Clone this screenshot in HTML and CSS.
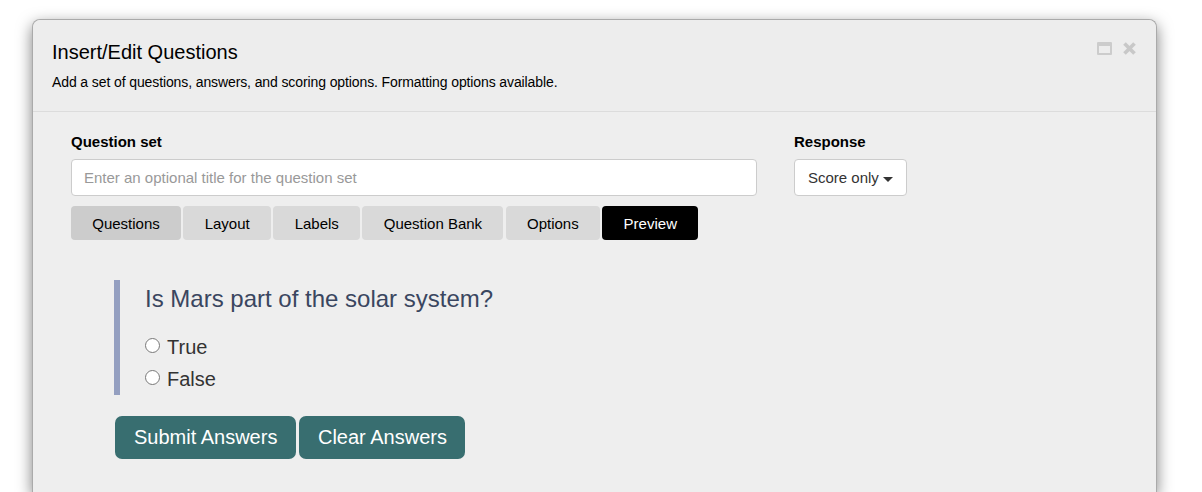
FILE: index.html
```html
<!DOCTYPE html>
<html lang="en">
<head>
<meta charset="utf-8">
<title>Insert/Edit Questions</title>
<link rel="stylesheet" href="styles.css">
</head>
<body>
<div class="dialog">
  <header class="head">
    <h1 class="title">Insert/Edit Questions</h1>
    <p class="sub">Add a set of questions, answers, and scoring options. Formatting options available.</p>
    <div class="win-icons">
      <svg class="ico" width="15" height="13" viewBox="0 0 15 13"><path fill="#ccc" fill-rule="evenodd" d="M1 0h13a1 1 0 0 1 1 1v11a1 1 0 0 1-1 1H1a1 1 0 0 1-1-1V1a1 1 0 0 1 1-1zM2 4v7h11V4z"/></svg>
      <svg class="ico" width="13" height="13" viewBox="0 0 13 13"><path stroke="#c8c8c8" stroke-width="3.7" d="M1.5 1.5l10 10M11.5 1.5l-10 10"/></svg>
    </div>
  </header>
  <main class="body">
    <div class="row">
      <div class="col-set">
        <label class="lbl">Question set</label>
        <input class="inp" type="text" placeholder="Enter an optional title for the question set">
      </div>
      <div class="col-resp">
        <label class="lbl">Response</label>
        <button class="drop">Score only <span class="caret"></span></button>
      </div>
    </div>
    <nav class="tabs">
      <span class="tab tab-on">Questions</span>
      <span class="tab">Layout</span>
      <span class="tab">Labels</span>
      <span class="tab">Question Bank</span>
      <span class="tab">Options</span>
      <span class="tab tab-dark">Preview</span>
    </nav>
    <section class="q">
      <div class="q-text">Is Mars part of the solar system?</div>
      <label class="opt"><input class="radio" type="radio" name="a">True</label>
      <label class="opt"><input class="radio" type="radio" name="a">False</label>
    </section>
    <div class="btns">
      <button class="btn">Submit Answers</button>
      <button class="btn btn-clear">Clear Answers</button>
    </div>
  </main>
</div>
</body>
</html>
```
FILE: styles.css
```css
* { box-sizing: border-box; }
html, body { margin: 0; height: 492px; overflow: hidden; background: #fff; }
body { font-family: "Liberation Sans", Arial, sans-serif; color: #000; }
.dialog {
  margin: 19px 45px 0 32px;
  height: 473px;
  background: #eee;
  border: 1px solid #aaa;
  border-bottom: 0;
  border-radius: 8px 8px 0 0;
  box-shadow: 0 5px 15px rgba(0, 0, 0, .5);
}
.head {
  position: relative;
  height: 92px;
  padding: 19px 19px 0;
  background: #ededed;
  border-radius: 8px 8px 0 0;
  border-bottom: 1px solid #dcdcdc;
}
.title { margin: 0; font-size: 20px; font-weight: 400; line-height: 26px; }
.sub { margin: 7px 0 0; font-size: 14px; line-height: 20px; letter-spacing: -.108px; }
.win-icons { position: absolute; top: 22px; right: 20px; display: flex; gap: 11px; }
.ico { display: block; }
.body { padding: 20px 38px 0; }
.row { display: flex; gap: 37px; }
.col-set { width: 686px; }
.lbl { display: block; font-size: 15px; font-weight: 700; line-height: 20px; margin-bottom: 7px; }
.inp {
  display: block;
  width: 100%;
  height: 37px;
  padding: 0 12px;
  background: #fff;
  border: 1px solid #ccc;
  border-radius: 4px;
  font: 15px "Liberation Sans", Arial, sans-serif;
}
.inp::placeholder { color: #999; opacity: 1; }
.drop {
  display: block;
  width: 113px;
  height: 37px;
  padding: 0;
  background: #fff;
  border: 1px solid #ccc;
  border-radius: 4px;
  color: #333;
  font: 15px "Liberation Sans", Arial, sans-serif;
}
.caret {
  display: inline-block;
  vertical-align: middle;
  border-top: 5px solid #333;
  border-left: 5px solid transparent;
  border-right: 5px solid transparent;
}
.tabs { display: flex; gap: 2.4px; margin-top: 10px; }
.tab {
  height: 34px;
  padding: 0 21.25px;
  background: #d9d9d9;
  border-radius: 4px;
  font-size: 15px;
  line-height: 35px;
}
.tab-on { background: #ccc; }
.tab-dark { background: #000; color: #fff; }
.q {
  margin: 40px 0 0 43px;
  height: 115px;
  padding-left: 25px;
  border-left: 6px solid #949fc0;
}
.q-text { padding-top: 4px; font-size: 24px; line-height: 29px; color: #3a4660; }
.opt { display: flex; align-items: center; height: 32px; font-size: 20px; color: #333; }
.q-text + .opt { margin-top: 18px; }
.radio { margin: 0 7px 3px 0; width: 15px; height: 15px; }
.btns { display: flex; gap: 2.6px; margin: 21px 0 0 44px; }
.btn {
  height: 43px;
  padding: 0 19px;
  background: #386e70;
  color: #fff;
  border: 0;
  border-radius: 7px;
  font: 20px "Liberation Sans", Arial, sans-serif;
}
.btn-clear { padding-right: 18.4px; }
```
